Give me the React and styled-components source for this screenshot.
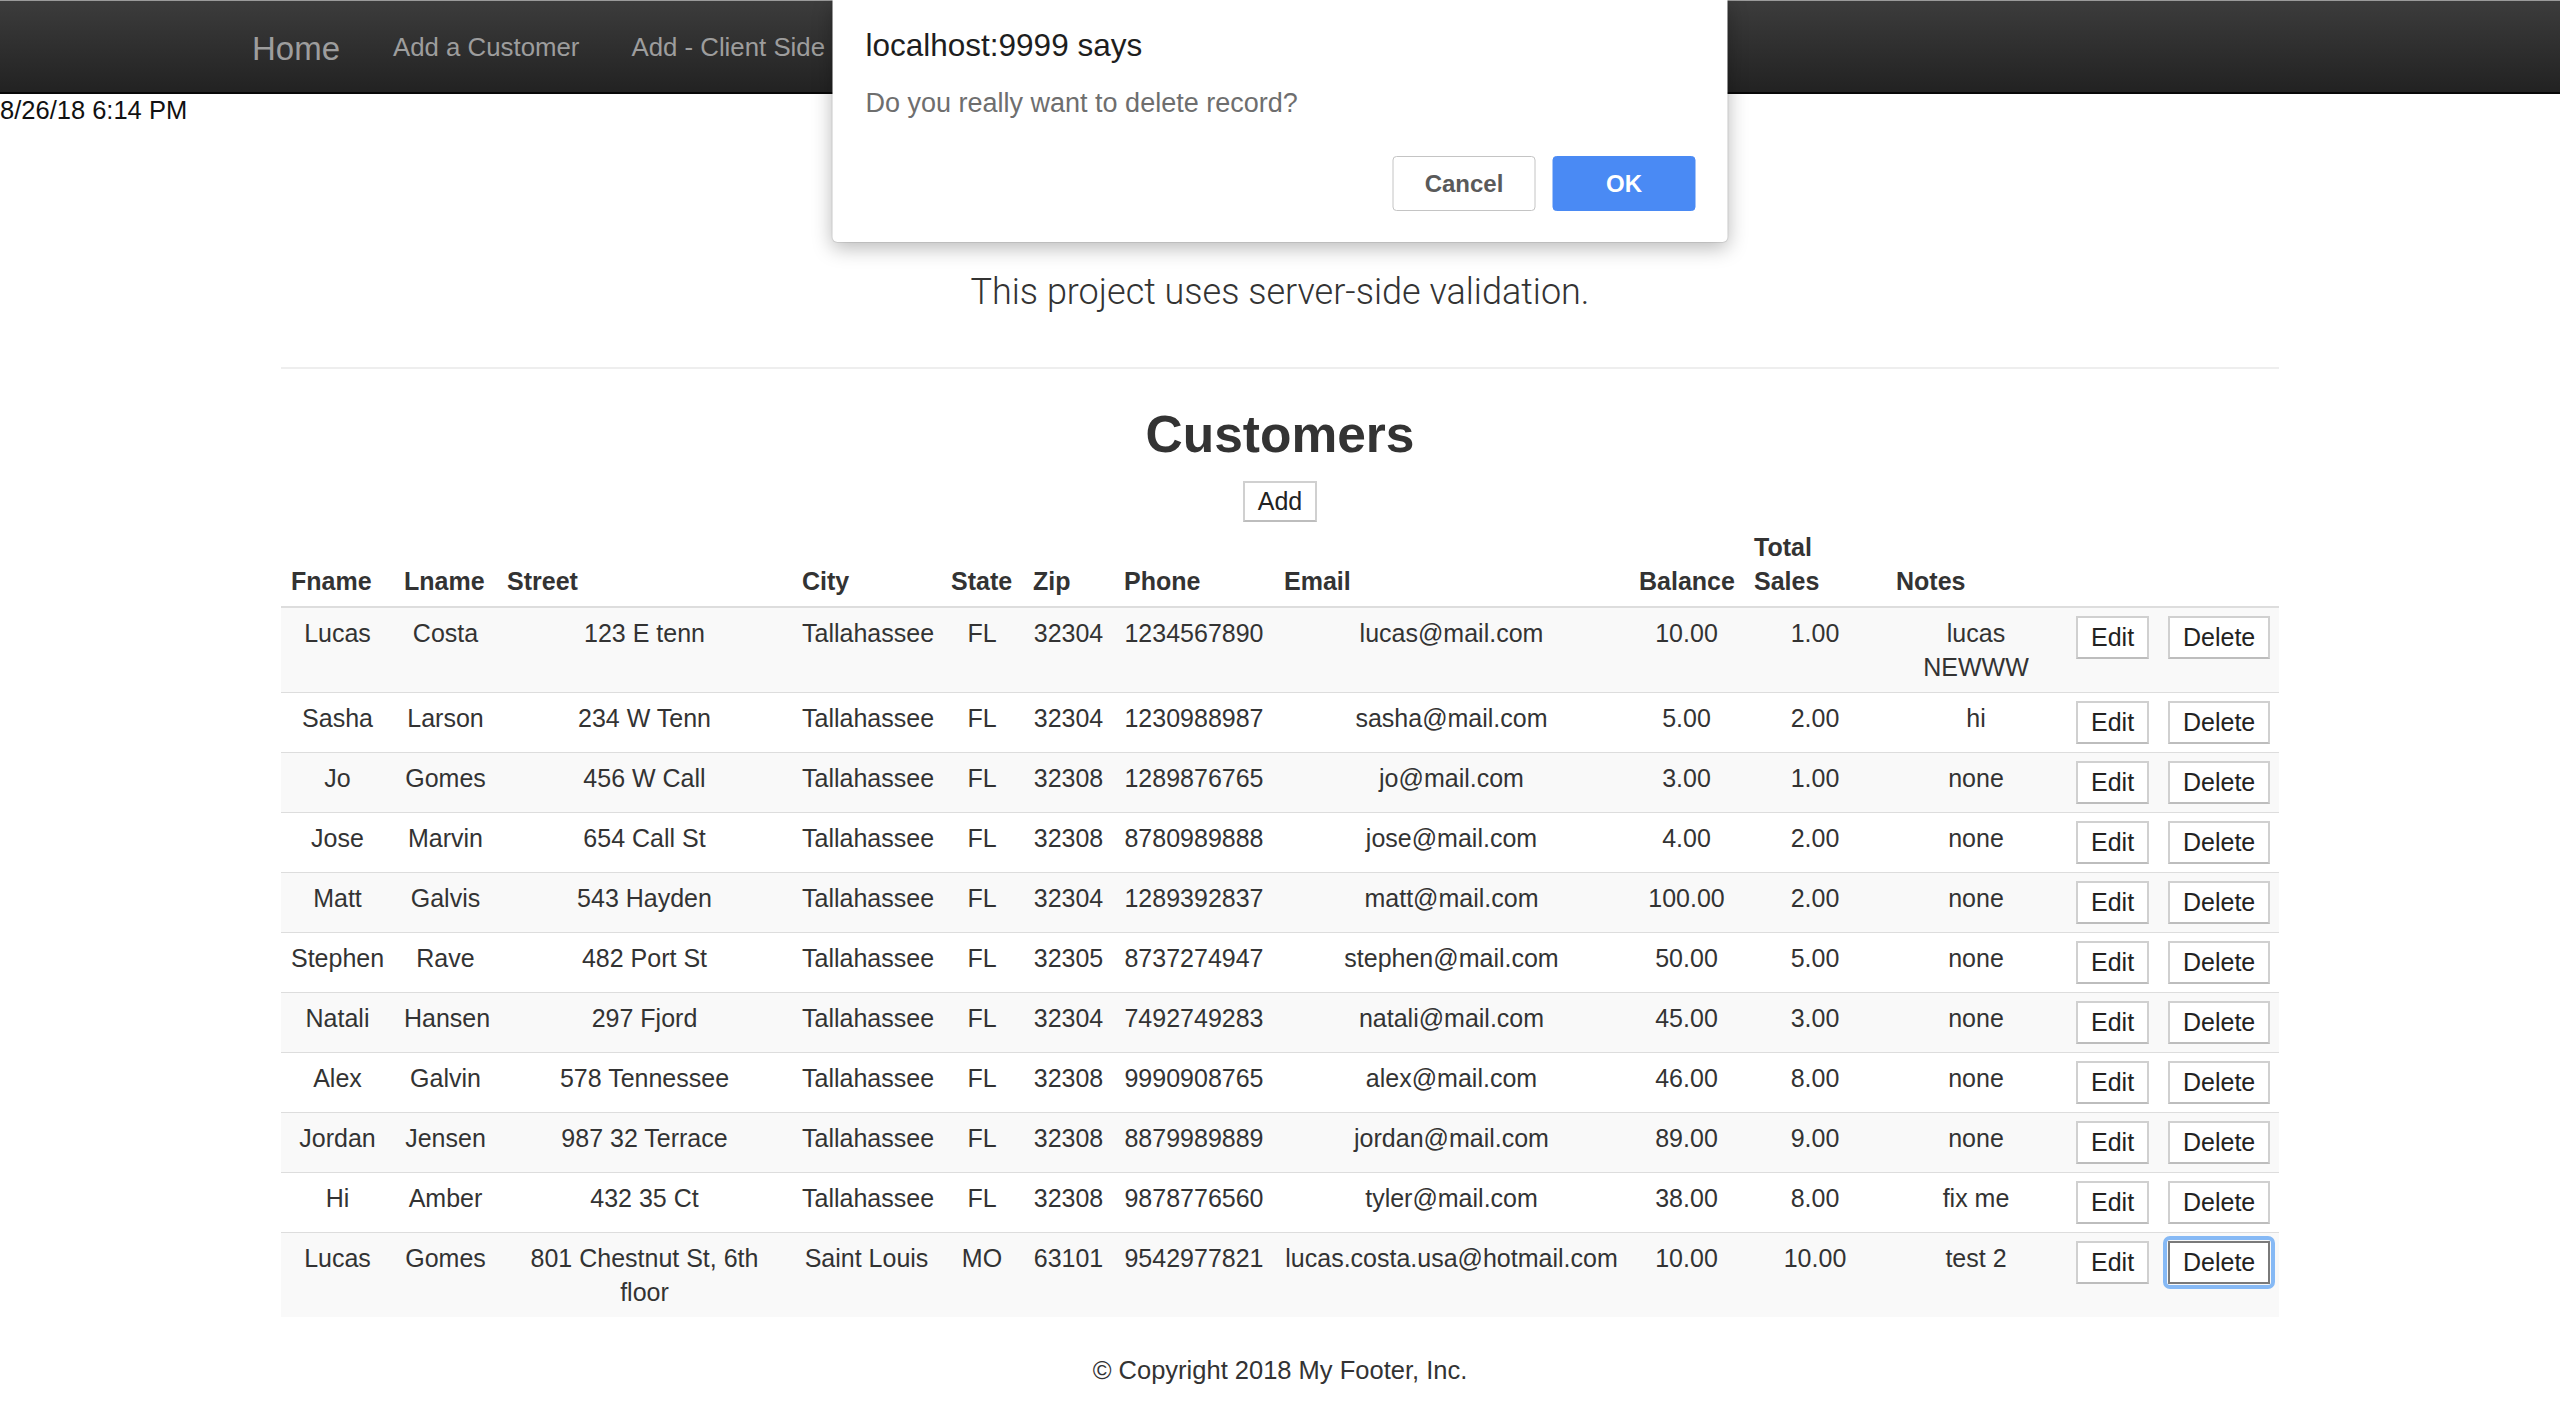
import React from 'react';
import styled, { createGlobalStyle } from 'styled-components';

const GlobalStyle = createGlobalStyle`
    html, body {
        margin: 0;
        padding: 0;
        background: #fff;
    }

    body {
        font-family: "Liberation Sans", Arial, Helvetica, sans-serif;
        font-size: 25px;
        line-height: 34px;
        color: #333;
    }
`;

const Page = styled.div`
    position: relative;
    min-height: 1408px;
`;

const Navbar = styled.nav`
    height: 91px;
    border-top: 1px solid #9a9a9a;
    border-bottom: 2px solid #080808;
    background: linear-gradient(to bottom, #3c3c3c 0%, #222 100%);
    display: flex;
    align-items: center;
    padding-left: 252px;
`;

const Brand = styled.a`
    font-size: 33px;
    line-height: 40px;
    color: #9d9d9d;
    padding-right: 27px;
    margin-top: 4px;
    text-decoration: none;
`;

const NavItem = styled.a`
    font-size: 25.8px;
    line-height: 34px;
    color: #9d9d9d;
    padding: 0 26px;
    text-decoration: none;
`;

const Stamp = styled.div`
    color: #111;
    font-size: 25.5px;
    line-height: 33px;
`;

const Container = styled.main`
    width: 1998px;
    margin: 0 auto;
`;

const Lead = styled.p`
    margin: 140px 0 0;
    font-family: Roboto, "Liberation Sans", Arial, sans-serif;
    font-weight: 300;
    font-size: 36px;
    line-height: 50px;
    text-align: center;
    color: #333;
`;

const Rule = styled.hr`
    margin: 50px 0 0;
    border: 0;
    border-top: 2px solid #eee;
`;

const Heading = styled.h2`
    margin: 35px 0 0;
    font-size: 51.5px;
    line-height: 60px;
    font-weight: 700;
    text-align: center;
    color: #333;
`;

const Center = styled.div`
    margin-top: 17px;
    text-align: center;
    line-height: 0;
`;

const Button = styled.button`
    position: relative;
    display: ${p => (p.$block ? 'block' : 'inline-block')};
    height: ${p => p.$h || 43}px;
    padding: 0 13px;
    font-family: inherit;
    font-size: 25px;
    line-height: 1;
    color: #222;
    background: #fff;
    border: 2px solid ${p => (p.$focused ? '#7a7a7a' : '#d0d0d0')};
    border-bottom-color: ${p => (p.$focused ? '#7a7a7a' : '#bdbdbd')};
    border-radius: 0;
    cursor: pointer;

    &::after {
        content: '';
        display: ${p => (p.$focused ? 'block' : 'none')};
        position: absolute;
        inset: -7px;
        border: 4px solid #86b9f5;
        border-radius: 7px;
    }
`;

const Table = styled.table`
    width: 100%;
    table-layout: fixed;
    border-collapse: collapse;
    border-spacing: 0;

    tbody tr:nth-of-type(odd) {
        background: #f9f9f9;
    }
`;

// widths are given as the full column width, padding included
const HeadCell = styled.th`
    width: ${p => p.$w - 20}px;
    padding: 8px 10px;
    text-align: left;
    vertical-align: bottom;
    font-weight: 700;
    line-height: 34px;
    border-bottom: 2px solid #ddd;
`;

const Cell = styled.td`
    padding: 8px 10px;
    text-align: center;
    vertical-align: top;
    line-height: 34px;
    border-top: 1px solid #ddd;
`;

const Footer = styled.footer`
    margin-top: 36px;
    font-size: 25.5px;
    text-align: center;
    line-height: 34px;
`;

const Dialog = styled.div`
    position: absolute;
    top: 0;
    left: 50%;
    transform: translateX(-50%);
    width: 895px;
    box-sizing: border-box;
    padding: 27px 32px 31px 33px;
    background: #fff;
    border-radius: 0 0 5px 5px;
    box-shadow: 0 6px 20px rgba(0, 0, 0, 0.28), 0 0 0 1px rgba(0, 0, 0, 0.08);
`;

const DialogTitle = styled.div`
    font-size: 31.5px;
    line-height: 36px;
    color: #1e1e1e;
`;

const DialogText = styled.div`
    margin-top: 24px;
    font-size: 27px;
    line-height: 32px;
    color: #6e6e6e;
`;

const DialogActions = styled.div`
    margin-top: 37px;
    display: flex;
    justify-content: flex-end;
    gap: 17px;
`;

const DialogButton = styled.button`
    width: 143px;
    height: 55px;
    font-family: inherit;
    font-size: 24px;
    font-weight: 700;
    border-radius: 4px;
    color: ${p => (p.$primary ? '#fff' : '#5a5a5a')};
    background: ${p => (p.$primary ? '#4a8af4' : '#fff')};
    border: 1px solid ${p => (p.$primary ? '#4a8af4' : '#c4c4c4')};
`;

const columns = [
    ['Fname', 113], ['Lname', 103], ['Street', 295], ['City', 149], ['State', 82],
    ['Zip', 91], ['Phone', 160], ['Email', 355], ['Balance', 115], ['Total Sales', 142],
    ['Notes', 180], ['', 92], ['', 121],
];

const customers = [
    ['Lucas', 'Costa', '123 E tenn', 'Tallahassee', 'FL', '32304', '1234567890', 'lucas@mail.com', '10.00', '1.00', 'lucas NEWWW'],
    ['Sasha', 'Larson', '234 W Tenn', 'Tallahassee', 'FL', '32304', '1230988987', 'sasha@mail.com', '5.00', '2.00', 'hi'],
    ['Jo', 'Gomes', '456 W Call', 'Tallahassee', 'FL', '32308', '1289876765', 'jo@mail.com', '3.00', '1.00', 'none'],
    ['Jose', 'Marvin', '654 Call St', 'Tallahassee', 'FL', '32308', '8780989888', 'jose@mail.com', '4.00', '2.00', 'none'],
    ['Matt', 'Galvis', '543 Hayden', 'Tallahassee', 'FL', '32304', '1289392837', 'matt@mail.com', '100.00', '2.00', 'none'],
    ['Stephen', 'Rave', '482 Port St', 'Tallahassee', 'FL', '32305', '8737274947', 'stephen@mail.com', '50.00', '5.00', 'none'],
    ['Natali', 'Hansen', '297 Fjord', 'Tallahassee', 'FL', '32304', '7492749283', 'natali@mail.com', '45.00', '3.00', 'none'],
    ['Alex', 'Galvin', '578 Tennessee', 'Tallahassee', 'FL', '32308', '9990908765', 'alex@mail.com', '46.00', '8.00', 'none'],
    ['Jordan', 'Jensen', '987 32 Terrace', 'Tallahassee', 'FL', '32308', '8879989889', 'jordan@mail.com', '89.00', '9.00', 'none'],
    ['Hi', 'Amber', '432 35 Ct', 'Tallahassee', 'FL', '32308', '9878776560', 'tyler@mail.com', '38.00', '8.00', 'fix me'],
    ['Lucas', 'Gomes', '801 Chestnut St, 6th floor', 'Saint Louis', 'MO', '63101', '9542977821', 'lucas.costa.usa@hotmail.com', '10.00', '10.00', 'test 2'],
];

const App = () => {
    return (
        <Page>
            <GlobalStyle />
            <Navbar>
                <Brand href="#">Home</Brand>
                <NavItem href="#">Add a Customer</NavItem>
                <NavItem href="#">Add - Client Side</NavItem>
            </Navbar>
            <Stamp>8/26/18 6:14 PM</Stamp>

            <Container>
                <Lead>This project uses server-side validation.</Lead>
                <Rule />
                <Heading>Customers</Heading>
                <Center><Button $h={41}>Add</Button></Center>

                <Table>
                    <thead>
                        <tr>
                            {columns.map(([label, w], i) => (
                                <HeadCell key={i} $w={w}>{label}</HeadCell>
                            ))}
                        </tr>
                    </thead>
                    <tbody>
                        {customers.map((row, r) => (
                            <tr key={r}>
                                {row.map((value, c) => <Cell key={c}>{value}</Cell>)}
                                <Cell><Button $block>Edit</Button></Cell>
                                <Cell><Button $block $focused={r === customers.length - 1}>Delete</Button></Cell>
                            </tr>
                        ))}
                    </tbody>
                </Table>

                <Footer>© Copyright 2018 My Footer, Inc.</Footer>
            </Container>

            <Dialog>
                <DialogTitle>localhost:9999 says</DialogTitle>
                <DialogText>Do you really want to delete record?</DialogText>
                <DialogActions>
                    <DialogButton>Cancel</DialogButton>
                    <DialogButton $primary>OK</DialogButton>
                </DialogActions>
            </Dialog>
        </Page>
    );
};

export default App;
